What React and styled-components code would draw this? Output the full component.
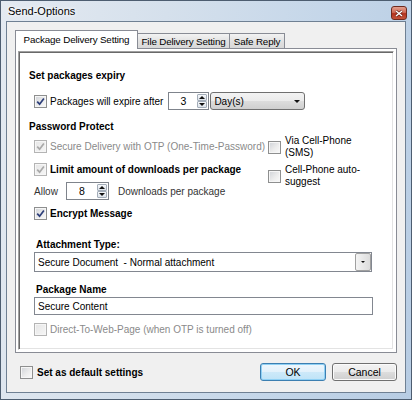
import React from "react";
import styled, { createGlobalStyle } from "styled-components";

const GlobalStyle = createGlobalStyle`
  html, body {
    margin: 0;
    padding: 0;
    background: #fff;
  }
  body {
    font-family: "Liberation Sans", Arial, sans-serif;
    font-size: 10px;
    color: #000;
  }
  * {
    box-sizing: border-box;
  }
`;

const Window = styled.div`
  width: 412px;
  height: 400px;
  border: 1px solid #4d5d70;
  background: linear-gradient(100deg, #e4eaf1 0%, #d5e0ec 35%, #c4d6e9 70%, #b7cce3 100%);
  padding: 0 5px 6px 5px;
  display: flex;
  flex-direction: column;
`;

const TitleBar = styled.div`
  height: 20px;
  display: flex;
  align-items: center;
  padding-left: 2px;
`;

const Title = styled.span`
  font-size: 11px;
  text-shadow: 0 0 5px #fff, 0 0 3px #fff;
`;

const CloseButton = styled.div`
  margin-left: auto;
  margin-right: -1px;
  margin-top: 4px;
  width: 16px;
  height: 14px;
  border: 1px solid #6e2a1e;
  border-radius: 3px;
  background: linear-gradient(#e3a08f 0%, #cf6a55 45%, #b3321d 55%, #c4543a 100%);
  display: flex;
  align-items: center;
  justify-content: center;
`;

const Dialog = styled.div`
  flex: 1;
  background: #f0f0f0;
  border: 1px solid #6f8093;
  padding: 8px 8px 0 8px;
  display: flex;
  flex-direction: column;
`;

const TabStrip = styled.div`
  height: 18px;
  display: flex;
  align-items: flex-end;
`;

const Tab = styled.div`
  width: ${(p) => p.$w}px;
  height: ${(p) => (p.$active ? 19 : 15)}px;
  margin-bottom: ${(p) => (p.$active ? -1 : 0)}px;
  margin-left: ${(p) => (p.$first ? 0 : -1)}px;
  position: relative;
  z-index: ${(p) => (p.$active ? 2 : 1)};
  border: 1px solid #898c95;
  border-bottom: none;
  background: ${(p) => (p.$active ? "#fff" : "linear-gradient(#f3f3f3, #e2e2e2 50%, #d8d8d8)")};
  display: flex;
  align-items: center;
  justify-content: center;
  padding-bottom: ${(p) => (p.$active ? 2 : 0)}px;
  font-size: 9.8px;
  letter-spacing: -0.15px;
  white-space: nowrap;
`;

const TabPage = styled.div`
  height: 305px;
  border: 1px solid #898c95;
  background: #fff;
  padding: 2px;
`;

const Panel = styled.div`
  height: 100%;
  border: 1px solid;
  border-color: #a0a0a0 #fff #fff #a0a0a0;
  box-shadow: inset 1px 1px 0 #696969, inset -1px -1px 0 #e3e3e3;
  padding: 17px 0 0 10px;
  display: flex;
  flex-direction: column;
`;

const Heading = styled.div`
  font-weight: bold;
  font-size: 10px;
  line-height: 14px;
  height: 14px;
  margin-top: ${(p) => p.$mt || 0}px;
  margin-left: ${(p) => p.$ml || 0}px;
`;

const Row = styled.div`
  display: flex;
  align-items: center;
  height: ${(p) => p.$h || 14}px;
  margin-top: ${(p) => p.$mt || 0}px;
  margin-left: 5px;
  white-space: nowrap;
`;

const Label = styled.span`
  margin-left: ${(p) => p.$gap ?? 3}px;
  color: ${(p) => (p.$disabled ? "#8a8a8a" : p.$dim ? "#333" : "#000")};
  font-weight: ${(p) => (p.$bold ? "bold" : "normal")};
  font-size: 10px;
`;

const Box = styled.span`
  width: 13px;
  height: 13px;
  flex: none;
  border: 1px solid ${(p) => (p.$disabled ? "#b4b4b4" : "#8e8f8f")};
  background: ${(p) =>
    p.$disabled
      ? "linear-gradient(135deg, #e6e6e6, #f6f6f6)"
      : "linear-gradient(135deg, #cfd2d7 0%, #ececec 55%, #fafafa 100%)"};
  box-shadow: inset 0 0 0 1px #f6f6f6;
  display: flex;
  align-items: center;
  justify-content: center;
`;

const Split = styled.div`
  display: flex;
  margin-top: 1px;
`;

const LeftCol = styled.div`
  width: 234px;
  padding-top: 4px;
  display: flex;
  flex-direction: column;
`;

const RightCol = styled.div`
  display: flex;
  flex-direction: column;
  gap: 5px;
  margin-left: 5px;
`;

const SideOption = styled.div`
  display: flex;
  align-items: center;
  line-height: 12px;
`;

const SideText = styled.span`
  margin-left: 4px;
  font-size: 10px;
`;

const Spin = styled.div`
  width: ${(p) => p.$w}px;
  height: 18px;
  margin-left: ${(p) => p.$ml}px;
  border: 1px solid #7f848c;
  background: #fff;
  display: flex;
  flex: none;
`;

const SpinValue = styled.div`
  flex: 1;
  display: flex;
  align-items: center;
  justify-content: center;
  font-size: 10.5px;
`;

const SpinButtons = styled.div`
  width: 11px;
  display: flex;
  flex-direction: column;
  padding: 1px 1px 1px 0;
`;

const SpinButton = styled.div`
  flex: 1;
  border: 1px solid #a3adb9;
  border-radius: 1px;
  background: linear-gradient(#f5f7fa, #dde3ea);
  display: flex;
  align-items: center;
  justify-content: center;
`;

const Arrow = styled.span`
  width: 0;
  height: 0;
  border-left: ${(p) => p.$size}px solid transparent;
  border-right: ${(p) => p.$size}px solid transparent;
  ${(p) => (p.$up ? "border-bottom" : "border-top")}: ${(p) => p.$size}px solid #111;
`;

const DropList = styled.div`
  width: 95px;
  height: 18px;
  margin-left: 1px;
  border: 1px solid #707070;
  border-radius: 3px;
  background: linear-gradient(#f3f3f3 0%, #ebebeb 50%, #dddddd 51%, #cfcfcf 100%);
  display: flex;
  align-items: center;
  padding: 0 4px 0 3px;
  justify-content: space-between;
  font-size: 10px;
`;

const Combo = styled.div`
  width: 338px;
  height: 20px;
  margin-left: 5px;
  border: 1px solid #828790;
  background: #fff;
  display: flex;
  align-items: center;
  padding-left: 3px;
  font-size: 10px;
`;

const ComboButton = styled.div`
  margin-left: auto;
  width: 16px;
  height: 18px;
  border: 1px solid #a0a0a0;
  border-radius: 2px;
  background: linear-gradient(90deg, #f4f4f4, #dcdcdc);
  display: flex;
  align-items: center;
  justify-content: center;
`;

const TextBox = styled.div`
  width: 339px;
  height: 18px;
  margin-left: 5px;
  border: 1px solid #828790;
  background: #fff;
  display: flex;
  align-items: center;
  padding-left: 3px;
  font-size: 10px;
`;

const BottomRow = styled.div`
  height: 18px;
  margin-top: 10px;
  display: flex;
  align-items: center;
  padding-left: 5px;
`;

const Buttons = styled.div`
  margin-left: auto;
  display: flex;
  gap: 6px;
`;

const Button = styled.div`
  width: ${(p) => p.$w}px;
  height: 18px;
  border: 1px solid ${(p) => (p.$default ? "#3c7fb1" : "#707070")};
  border-radius: 3px;
  background: ${(p) =>
    p.$default
      ? "linear-gradient(#eef7fd 0%, #e2f1fb 50%, #cde9f9 51%, #bfe3f7 100%)"
      : "linear-gradient(#f3f3f3 0%, #ebebeb 50%, #dddddd 51%, #cfcfcf 100%)"};
  box-shadow: inset 0 0 0 1px ${(p) => (p.$default ? "#8fd0f4" : "#fbfbfb")};
  display: flex;
  align-items: center;
  justify-content: center;
  font-size: 10.5px;
`;

function CheckBox({ checked, disabled }) {
  return (
    <Box $disabled={disabled}>
      {checked && (
        <svg width="9" height="9" viewBox="0 0 9 9">
          <path
            d="M1.2 4.6 L3.6 7.2 L7.9 1.4"
            fill="none"
            stroke={disabled ? "#a9a9a9" : "#2d3f7a"}
            strokeWidth="1.7"
          />
        </svg>
      )}
    </Box>
  );
}

function SpinBox({ value, w, ml }) {
  return (
    <Spin $w={w} $ml={ml}>
      <SpinValue>{value}</SpinValue>
      <SpinButtons>
        <SpinButton>
          <Arrow $up $size={3} />
        </SpinButton>
        <SpinButton>
          <Arrow $size={3} />
        </SpinButton>
      </SpinButtons>
    </Spin>
  );
}

export default function App() {
  return (
    <>
      <GlobalStyle />
      <Window>
        <TitleBar>
          <Title>Send-Options</Title>
          <CloseButton>
            <svg width="8" height="7" viewBox="0 0 8 7">
              <path d="M1 1 L7 6 M7 1 L1 6" stroke="#5a1a10" strokeWidth="2.6" />
              <path d="M1 1 L7 6 M7 1 L1 6" stroke="#fff" strokeWidth="1.5" />
            </svg>
          </CloseButton>
        </TitleBar>

        <Dialog>
          <TabStrip>
            <Tab $active $first $w={123}>Package Delivery Setting</Tab>
            <Tab $w={93}>File Delivery Setting</Tab>
            <Tab $w={56}>Safe Reply</Tab>
          </TabStrip>

          <TabPage>
            <Panel>
              <Heading>Set packages expiry</Heading>
              <Row $h={18} $mt={9}>
                <CheckBox checked />
                <Label>Packages will expire after</Label>
                <SpinBox value="3" w={41} ml={5} />
                <DropList>
                  <span>Day(s)</span>
                  <Arrow $size={3.5} />
                </DropList>
              </Row>

              <Heading $mt={10}>Password Protect</Heading>
              <Split>
                <LeftCol>
                  <Row>
                    <CheckBox checked disabled />
                    <Label $disabled>Secure Delivery with OTP (One-Time-Password)</Label>
                  </Row>
                  <Row $mt={9}>
                    <CheckBox checked disabled />
                    <Label $bold>Limit amount of downloads per package</Label>
                  </Row>
                  <Row $h={18} $mt={6}>
                    <Label $gap={0} $dim>Allow</Label>
                    <SpinBox value="8" w={43} ml={8} />
                    <Label $gap={9} $dim>Downloads per package</Label>
                  </Row>
                </LeftCol>
                <RightCol>
                  <SideOption>
                    <CheckBox />
                    <SideText>
                      Via Cell-Phone
                      <br />
                      (SMS)
                    </SideText>
                  </SideOption>
                  <SideOption>
                    <CheckBox />
                    <SideText>
                      Cell-Phone auto-
                      <br />
                      suggest
                    </SideText>
                  </SideOption>
                </RightCol>
              </Split>

              <Row $mt={6}>
                <CheckBox checked />
                <Label $bold>Encrypt Message</Label>
              </Row>

              <Heading $mt={18} $ml={7}>Attachment Type:</Heading>
              <Combo>
                Secure Document&nbsp; - Normal attachment
                <ComboButton>
                  <Arrow $size={2.5} />
                </ComboButton>
              </Combo>

              <Heading $mt={11} $ml={7}>Package Name</Heading>
              <TextBox>Secure Content</TextBox>

              <Row $mt={7}>
                <CheckBox disabled />
                <Label $disabled>Direct-To-Web-Page (when OTP is turned off)</Label>
              </Row>
            </Panel>
          </TabPage>

          <BottomRow>
            <CheckBox />
            <Label $bold $gap={4}>Set as default settings</Label>
            <Buttons>
              <Button $default $w={66}>OK</Button>
              <Button $w={65}>Cancel</Button>
            </Buttons>
          </BottomRow>
        </Dialog>
      </Window>
    </>
  );
}
